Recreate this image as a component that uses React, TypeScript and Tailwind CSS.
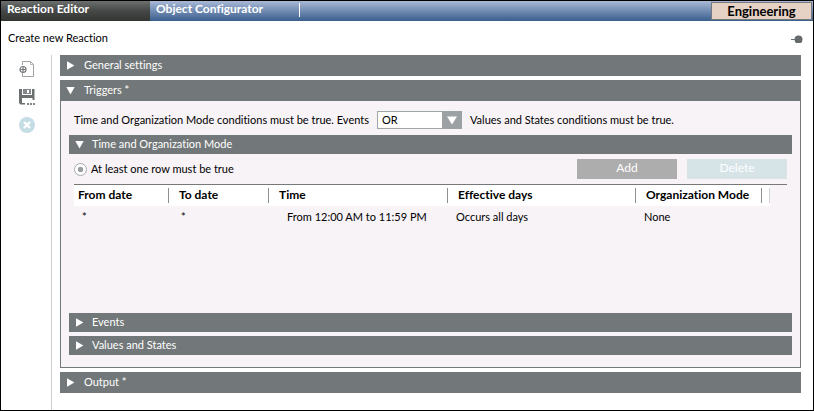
import { useState, type ReactNode } from "react";

function Triangle({ open }: { open: boolean }) {
  return (
    <svg viewBox="0 0 9 9" className="h-[9px] w-[9px] shrink-0" aria-hidden="true">
      {open ? <path d="M0.3 1h8.4L4.5 8.4z" fill="#fff" /> : <path d="M1 0.3v8.4L8.4 4.5z" fill="#fff" />}
    </svg>
  );
}

type SectionProps = {
  title: string;
  open: boolean;
  onToggle: () => void;
  nested?: boolean;
};

function SectionHeader({ title, open, onToggle, nested = false }: SectionProps) {
  return (
    <button
      type="button"
      aria-expanded={open}
      onClick={onToggle}
      className={
        "flex w-full items-center bg-[#727879] pb-px text-left text-white " +
        (nested ? "h-[19px] gap-2 px-1.5" : "h-[21px] gap-[9px] px-1.5")
      }
    >
      <Triangle open={open} />
      <span>{title}</span>
    </button>
  );
}

function ToolButton({ label, disabled, children }: { label: string; disabled?: boolean; children: ReactNode }) {
  return (
    <button type="button" aria-label={label} disabled={disabled} className="flex h-5 w-5 items-center justify-center">
      {children}
    </button>
  );
}

function Toolbar() {
  return (
    <div className="flex w-[51px] shrink-0 flex-col items-center gap-2 border-r border-[#cfcfcf] pt-1 pl-0.5">
      <ToolButton label="New">
        <svg viewBox="0 0 18 18" className="h-[18px] w-[18px]" fill="none">
          <path d="M4.5 5V1.5h8l3 3v12h-11V13" stroke="#a0a3a4" />
          <path d="M12.5 1.5v3h3" stroke="#b5b7b8" />
          <circle cx="5" cy="9.5" r="3" stroke="#74787a" fill="#fff" strokeWidth="1.2" />
          <path d="M5 7v5M2.5 9.5h5" stroke="#74787a" strokeWidth="1.2" />
        </svg>
      </ToolButton>
      <ToolButton label="Save as">
        <svg viewBox="0 0 18 18" className="h-[18px] w-[18px]">
          <path d="M1 1h3v6h10V1h2.5v11h-2V10H4v5h3v1.5H2.5L1 15z" fill="#6c7071" />
          <path d="M5 1h8v5H5z" fill="#83878a" />
          <path d="M9 2h2v3H9z" fill="#fff" />
          <path d="M9 15h2v2H9zM12 15h2v2h-2zM15 15h2v2h-2z" fill="#83878a" />
        </svg>
      </ToolButton>
      <ToolButton label="Delete reaction" disabled>
        <svg viewBox="0 0 16 16" className="h-4 w-4">
          <circle cx="8" cy="8" r="8" fill="#c5dde5" />
          <path d="M5 5l6 6M11 5l-6 6" stroke="#fff" strokeWidth="2.4" />
        </svg>
      </ToolButton>
    </div>
  );
}

const columns = ["From date", "To date", "Time", "Effective days", "Organization Mode"];

function ScheduleTable() {
  return (
    <div className="border-t border-[#77787a]">
      <table className="w-[696px] table-fixed border-collapse text-left">
        <colgroup>
          <col className="w-[95px]" />
          <col className="w-[100px]" />
          <col className="w-[179px]" />
          <col className="w-[188px]" />
          <col className="w-[126px]" />
          <col />
        </colgroup>
        <thead>
          <tr className="h-[21px] bg-white">
            {columns.map((name, i) => (
              <th key={name} scope="col" className="p-0 text-[12px] font-bold whitespace-nowrap">
                <div
                  className={
                    "h-[15px] border-r border-[#8d9091] leading-[14px] " + (i === 0 ? "pl-1" : "pl-2.5")
                  }
                >
                  {name}
                </div>
              </th>
            ))}
            <td className="p-0">
              <div className="h-[15px] border-r border-[#d0d2d3]" />
            </td>
          </tr>
        </thead>
        <tbody>
          <tr className="h-[22px]">
            <td className="p-0 pl-2">*</td>
            <td className="p-0 pl-3">*</td>
            <td className="p-0 pl-4.5">From 12:00 AM to 11:59 PM</td>
            <td className="p-0 pl-2">Occurs all days</td>
            <td className="p-0 pl-2">None</td>
            <td className="p-0" />
          </tr>
        </tbody>
      </table>
    </div>
  );
}

export default function App() {
  const [open, setOpen] = useState({
    general: false,
    triggers: true,
    time: true,
    events: false,
    values: false,
    output: false,
  });
  const toggle = (key: keyof typeof open) => () => setOpen((s) => ({ ...s, [key]: !s[key] }));

  return (
    <div className="flex min-h-screen flex-col border border-black bg-white font-['Lato','Open_Sans',sans-serif] text-[11px] leading-4 text-black [font-variant-ligatures:none]">
      <nav className="flex h-5 bg-linear-to-b from-[#a9b9d6] to-[#3a5f8e] text-[12px] font-bold text-white">
        <button
          type="button"
          className="w-[149px] bg-linear-to-b from-[#6c706f] via-[#454846] to-[#333532] px-1.5 pb-1 text-left leading-4"
        >
          Reaction Editor
        </button>
        <button type="button" className="w-[149px] px-1.5 pb-1 text-left leading-4">
          Object Configurator
        </button>
        <div className="mt-0.5 h-[14px] w-px bg-white" />
        <button
          type="button"
          className="mt-px mr-px ml-auto h-[18px] w-[101px] border border-[#77787c] bg-[#e6d2c5] text-[13px] leading-4 text-black"
        >
          Engineering
        </button>
      </nav>

      <header className="flex h-[34px] items-center justify-between pr-2.5 pl-[7px]">
        <h1>Create new Reaction</h1>
        <button type="button" aria-label="Pin">
          <svg viewBox="0 0 12 10" className="h-2.5 w-3">
            <path d="M0 6.5h5" stroke="#6b7071" />
            <circle cx="7.5" cy="6.5" r="4" fill="#656b6c" />
          </svg>
        </button>
      </header>

      <div className="flex grow">
        <Toolbar />
        <main className="flex min-w-0 grow flex-col gap-1 pr-3 pl-2">
          <SectionHeader title="General settings" open={open.general} onToggle={toggle("general")} />

          <section>
            <SectionHeader title="Triggers *" open={open.triggers} onToggle={toggle("triggers")} />
            {open.triggers && (
              <div className="border border-t-0 border-[#727879] bg-[#f7f3f7] px-2 pb-3">
                <div className="flex h-[34px] items-center gap-2 pt-1 pl-[5px] whitespace-nowrap">
                  <label htmlFor="operator">Time and Organization Mode conditions must be true. Events</label>
                  <div className="relative">
                    <select
                      id="operator"
                      defaultValue="OR"
                      className="block h-[18px] w-[85px] appearance-none border border-[#a0a5a9] bg-white pl-1 leading-4"
                    >
                      <option>OR</option>
                      <option>AND</option>
                    </select>
                    <span className="pointer-events-none absolute inset-y-0 right-0 flex w-5 items-center justify-center bg-[#9ca1a3]">
                      <svg viewBox="0 0 10 9" className="h-[9px] w-2.5" aria-hidden="true">
                        <path d="M0 0.5h10L5 8.5z" fill="#fff" />
                      </svg>
                    </span>
                  </div>
                  <span>Values and States conditions must be true.</span>
                </div>

                <SectionHeader nested title="Time and Organization Mode" open={open.time} onToggle={toggle("time")} />
                {open.time && (
                  <div className="min-h-[159px] px-[5px] pt-[5px]">
                    <div className="flex h-[25px] items-start justify-between">
                      <label className="flex items-center gap-1 pt-0.5">
                        <input
                          type="radio"
                          name="rows"
                          defaultChecked
                          className="m-0 h-[13px] w-[13px] appearance-none rounded-full border border-[#a5a8aa] bg-white bg-radial from-[#9b9ea0] from-30% to-white to-40%"
                        />
                        At least one row must be true
                      </label>
                      <div className="flex gap-2.5">
                        <button type="button" className="h-5 w-[100px] bg-[#adadad] pb-0.5 text-[12px] text-white">
                          Add
                        </button>
                        <button type="button" disabled className="h-5 w-[100px] bg-[#d6e3e7] pb-0.5 text-[12px] text-white">
                          Delete
                        </button>
                      </div>
                    </div>
                    <ScheduleTable />
                  </div>
                )}
                <div className="flex flex-col gap-1">
                  <SectionHeader nested title="Events" open={open.events} onToggle={toggle("events")} />
                  <SectionHeader nested title="Values and States" open={open.values} onToggle={toggle("values")} />
                </div>
              </div>
            )}
          </section>

          <SectionHeader title="Output *" open={open.output} onToggle={toggle("output")} />
        </main>
      </div>
    </div>
  );
}
